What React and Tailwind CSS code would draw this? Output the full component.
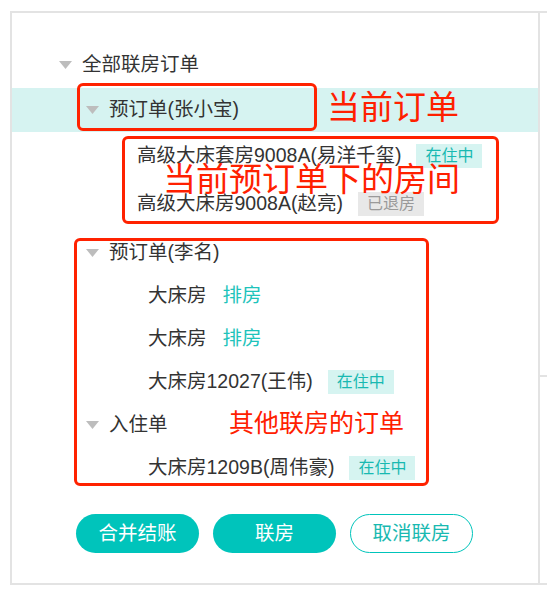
import React from 'react'

const Caret = () => (
  <svg width="13" height="8" viewBox="0 0 13 8" className="shrink-0 mr-[10px]">
    <polygon points="0,0 13,0 6.5,8" fill="#bdbdbd" />
  </svg>
)

const Tag = ({ children, grey }) => (
  <span
    className={`ml-[15px] h-[24px] px-[9px] flex items-center text-[16px] leading-none ${
      grey ? 'bg-[#e8e8e8] text-[#9a9a9a]' : 'bg-[#d6f4f1] text-[#19b9b1]'
    }`}
  >
    {children}
  </span>
)

function App() {
  return (
    <div className="w-[547px] h-[593px] overflow-hidden bg-white font-['Liberation_Sans','Noto_Sans_CJK_SC',sans-serif] text-[#333] text-[19.5px]">
      <div className="relative ml-[10px] mt-[11px] w-[545px] h-[574px] border-2 border-[#e3e3e3] flex">
        {/* tree */}
        <div className="w-[528px] h-full border-r-2 border-[#e3e3e3] pt-[29px]">
          <div className="h-[46px] pl-[47px] flex items-center">
            <Caret />
            全部联房订单
          </div>
          <div className="h-[44px] pl-[74px] flex items-center bg-[#d6f3f1]">
            <Caret />
            预订单(张小宝)
          </div>
          <div className="h-[48px] pl-[125px] flex items-center">
            高级大床套房9008A(易洋千玺)
            <Tag>在住中</Tag>
          </div>
          <div className="h-[48px] pl-[125px] flex items-center">
            高级大床房9008A(赵亮)
            <Tag grey>已退房</Tag>
          </div>
          <div className="mt-[3px] h-[43px] pl-[74px] flex items-center">
            <Caret />
            预订单(李名)
          </div>
          <div className="h-[43px] pl-[136px] flex items-center">
            大床房
            <span className="ml-[16px] text-[#1ec3bb]">排房</span>
          </div>
          <div className="h-[43px] pl-[136px] flex items-center">
            大床房
            <span className="ml-[16px] text-[#1ec3bb]">排房</span>
          </div>
          <div className="h-[43px] pl-[136px] flex items-center">
            大床房12027(王伟)
            <Tag>在住中</Tag>
          </div>
          <div className="h-[43px] pl-[74px] flex items-center">
            <Caret />
            入住单
          </div>
          <div className="h-[43px] pl-[136px] flex items-center">
            大床房1209B(周伟豪)
            <Tag>在住中</Tag>
          </div>

          <div className="mt-[25px] pl-[64px] flex gap-[14px]">
            <button className="w-[123px] h-[39px] rounded-full bg-[#00c4bb] text-white">合并结账</button>
            <button className="w-[123px] h-[39px] rounded-full bg-[#00c4bb] text-white">联房</button>
            <button className="w-[123px] h-[39px] rounded-full border-[1.5px] border-[#00c4bb] text-[#19b9b1] bg-white">
              取消联房
            </button>
          </div>
        </div>
        <div className="flex-1">
          <div className="h-[364px] border-b-2 border-[#e3e3e3]"></div>
        </div>

        {/* annotations */}
        <div className="absolute left-[65px] top-[70px] w-[240px] h-[48px] border-[3px] border-[#ff2200] rounded-[6px]"></div>
        <div className="absolute left-[315px] top-[78px] text-[33px] leading-none text-[#ff2000]">当前订单</div>
        <div className="absolute left-[110px] top-[123px] w-[377px] h-[88px] border-[3px] border-[#ff2200] rounded-[6px]"></div>
        <div className="absolute left-[151px] top-[150px] text-[33px] leading-none text-[#ff2000]">当前预订单下的房间</div>
        <div className="absolute left-[62px] top-[225px] w-[355px] h-[248px] border-[3px] border-[#ff2200] rounded-[6px]"></div>
        <div className="absolute left-[217px] top-[398px] text-[25px] leading-none text-[#ff2000]">其他联房的订单</div>
      </div>
    </div>
  )
}

export default App
